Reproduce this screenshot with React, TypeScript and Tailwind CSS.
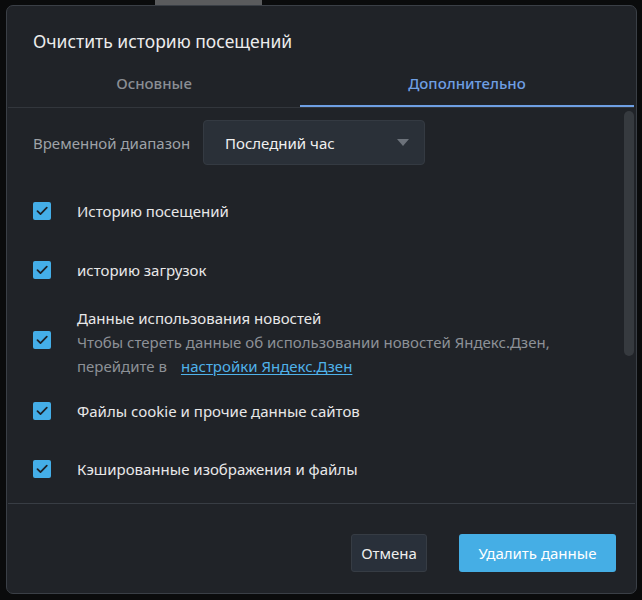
import React, { useState } from 'react';

type Item = { id: string; label: string };

const items: Item[] = [
  { id: 'history', label: 'Историю посещений' },
  { id: 'downloads', label: 'историю загрузок' },
  { id: 'news', label: 'Данные использования новостей' },
  { id: 'cookies', label: 'Файлы cookie и прочие данные сайтов' },
  { id: 'cache', label: 'Кэшированные изображения и файлы' },
];

const CheckBox: React.FC<{ checked: boolean; onToggle: () => void; className?: string }> = ({ checked, onToggle, className }) => (
  <button
    onClick={onToggle}
    className={`w-[18px] h-[18px] shrink-0 rounded-[2px] flex items-center justify-center ${checked ? 'bg-[#44aee8]' : 'border border-[#5b6068]'} ${className || ''}`}
  >
    {checked && (
      <svg width="12" height="10" viewBox="0 0 12 10" fill="none">
        <path d="M1.5 5.2 L4.5 8.2 L10.8 1.6" stroke="#1d2127" strokeWidth="1.7" strokeLinecap="round" strokeLinejoin="round" />
      </svg>
    )}
  </button>
);

export default function App() {
  const [tab, setTab] = useState<'basic' | 'extra'>('extra');
  const [checked, setChecked] = useState<Record<string, boolean>>({
    history: true,
    downloads: true,
    news: true,
    cookies: true,
    cache: true,
  });

  const toggle = (id: string) => setChecked(prev => ({ ...prev, [id]: !prev[id] }));

  return (
    <div className="w-[642px] min-h-[600px] bg-[#0a0b0c] font-['Noto_Sans',sans-serif]">
      {/* page behind the dialog */}
      <div className="h-[5px] flex">
        <div className="ml-[155px] w-[107px] bg-[#5a5b5d]" />
      </div>

      <div className="ml-[6px] w-[631px] h-[589px] rounded-[7px] border border-[#3a3f46] bg-[#202328] flex flex-col overflow-hidden">
        {/* Title */}
        <div className="pl-[26px] pt-[23px] pb-[4px] text-[17.5px] leading-[24px] text-[#ececec]">
          Очистить историю посещений
        </div>

        {/* Tabs */}
        <div className="flex mx-[1px] mr-[2px] border-b border-[#32363c]">
          <button
            onClick={() => setTab('basic')}
            className={`w-[292px] h-[50px] pt-[4px] flex items-center justify-center text-[15px] font-medium border-b-2 ${tab === 'basic' ? 'text-[#6e9fe3] border-[#6e9fe3]' : 'text-[#8a8e94] border-transparent'}`}
          >
            Основные
          </button>
          <button
            onClick={() => setTab('extra')}
            className={`flex-1 h-[50px] pt-[4px] flex items-center justify-center text-[15px] font-medium border-b-2 ${tab === 'extra' ? 'text-[#6e9fe3] border-[#6e9fe3]' : 'text-[#8a8e94] border-transparent'}`}
          >
            Дополнительно
          </button>
        </div>

        {/* Scrollable content */}
        <div className="flex flex-1 min-h-0">
          <div className="flex-1 pl-[26px] text-[15px] leading-[24px]">
            <div className="flex items-center mt-[12px]">
              <span className="text-[#9ea2a7] w-[170px]">Временной диапазон</span>
              <button className="w-[222px] h-[45px] rounded-[4px] border border-[#343a42] bg-[#2a3038] pl-[21px] pr-[15px] flex items-center justify-between text-[#f0f0f0]">
                <span>Последний час</span>
                <svg width="12" height="7" viewBox="0 0 12 7">
                  <path d="M0 0 H12 L6 7 Z" fill="#6c727a" />
                </svg>
              </button>
            </div>

            <div className="flex items-center mt-[34px]">
              <CheckBox checked={checked.history} onToggle={() => toggle('history')} />
              <span className="ml-[26px] text-[#e8e8e8]">{items[0].label}</span>
            </div>

            <div className="flex items-center mt-[35px]">
              <CheckBox checked={checked.downloads} onToggle={() => toggle('downloads')} />
              <span className="ml-[26px] text-[#e8e8e8]">{items[1].label}</span>
            </div>

            <div className="flex items-center mt-[24px]">
              <CheckBox checked={checked.news} onToggle={() => toggle('news')} className="mb-[4px]" />
              <div className="ml-[26px]">
                <div className="text-[#e8e8e8]">{items[2].label}</div>
                <div className="text-[#8d9197]">Чтобы стереть данные об использовании новостей Яндекс.Дзен,</div>
                <div className="text-[#8d9197]">
                  перейдите в
                  <a href="#" className="ml-[14px] text-[#4fb2ea] underline underline-offset-2">настройки Яндекс.Дзен</a>
                </div>
              </div>
            </div>

            <div className="flex items-center mt-[21px]">
              <CheckBox checked={checked.cookies} onToggle={() => toggle('cookies')} />
              <span className="ml-[26px] text-[#e8e8e8]">{items[3].label}</span>
            </div>

            <div className="flex items-center mt-[34px]">
              <CheckBox checked={checked.cache} onToggle={() => toggle('cache')} />
              <span className="ml-[26px] text-[#e8e8e8]">{items[4].label}</span>
            </div>
          </div>

          {/* scrollbar */}
          <div className="w-[10px] mr-[2px] pt-[3px]">
            <div className="h-[245px] rounded-full bg-[#363a3f]" />
          </div>
        </div>

        {/* Footer */}
        <div className="h-[90px] mx-[1px] border-t border-[#383d44] flex items-start justify-end gap-[32px] pt-[30px] pr-[19px] text-[15px]">
          <button className="w-[76px] h-[38px] rounded-[3px] border border-[#363c44] bg-[#29303a] text-[#eeeeee]">
            Отмена
          </button>
          <button className="w-[157px] h-[38px] rounded-[3px] bg-[#45aee5] text-white">
            Удалить данные
          </button>
        </div>
      </div>
    </div>
  );
}
